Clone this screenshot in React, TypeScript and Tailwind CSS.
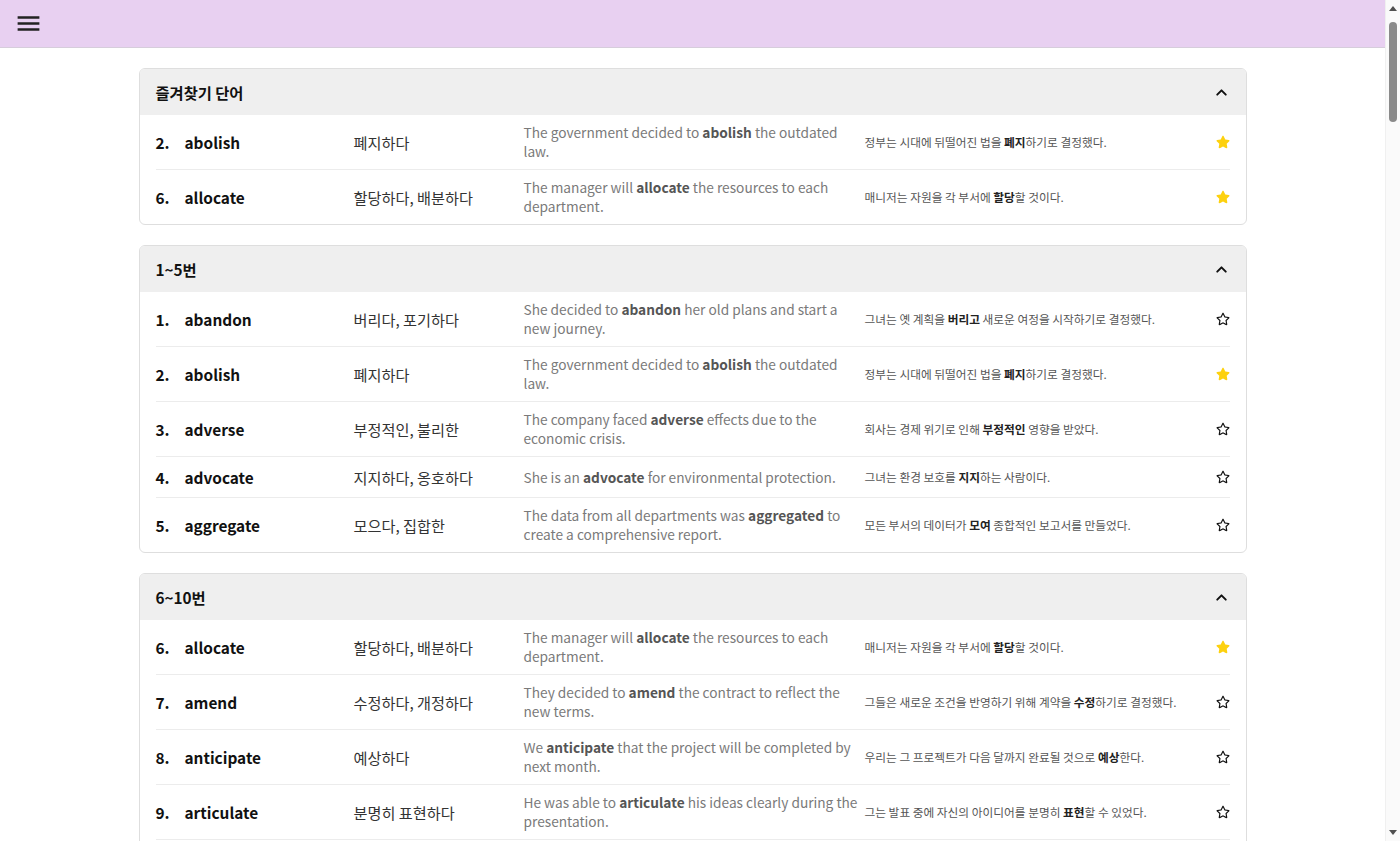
import React from "react";
import { FaStar, FaRegStar } from "react-icons/fa";
import { MdMenu } from "react-icons/md";
import { ChevronUp } from "lucide-react";

type Word = {
  n: number;
  word: string;
  meaning: string;
  en: [string, string, string];
  ko: [string, string, string];
  fav?: boolean;
};

const base: Omit<Word, "n">[] = [
  { word: "abandon", meaning: "버리다, 포기하다", en: ["She decided to ", "abandon", " her old plans and start a new journey."], ko: ["그녀는 옛 계획을 ", "버리고", " 새로운 여정을 시작하기로 결정했다."] },
  { word: "abolish", meaning: "폐지하다", en: ["The government decided to ", "abolish", " the outdated law."], ko: ["정부는 시대에 뒤떨어진 법을 ", "폐지", "하기로 결정했다."], fav: true },
  { word: "adverse", meaning: "부정적인, 불리한", en: ["The company faced ", "adverse", " effects due to the economic crisis."], ko: ["회사는 경제 위기로 인해 ", "부정적인", " 영향을 받았다."] },
  { word: "advocate", meaning: "지지하다, 옹호하다", en: ["She is an ", "advocate", " for environmental protection."], ko: ["그녀는 환경 보호를 ", "지지", "하는 사람이다."] },
  { word: "aggregate", meaning: "모으다, 집합한", en: ["The data from all departments was ", "aggregated", " to create a comprehensive report."], ko: ["모든 부서의 데이터가 ", "모여", " 종합적인 보고서를 만들었다."] },
  { word: "allocate", meaning: "할당하다, 배분하다", en: ["The manager will ", "allocate", " the resources to each department."], ko: ["매니저는 자원을 각 부서에 ", "할당", "할 것이다."], fav: true },
  { word: "amend", meaning: "수정하다, 개정하다", en: ["They decided to ", "amend", " the contract to reflect the new terms."], ko: ["그들은 새로운 조건을 반영하기 위해 계약을 ", "수정", "하기로 결정했다."] },
  { word: "anticipate", meaning: "예상하다", en: ["We ", "anticipate", " that the project will be completed by next month."], ko: ["우리는 그 프로젝트가 다음 달까지 완료될 것으로 ", "예상", "한다."] },
  { word: "articulate", meaning: "분명히 표현하다", en: ["He was able to ", "articulate", " his ideas clearly during the presentation."], ko: ["그는 발표 중에 자신의 아이디어를 분명히 ", "표현", "할 수 있었다."] },
  { word: "assess", meaning: "평가하다", en: ["The teacher will ", "assess", " the students' progress at the end of the term."], ko: ["선생님은 학기 말에 학생들의 진도를 ", "평가", "할 것이다."] },
  { word: "assume", meaning: "가정하다, 떠맡다", en: ["We cannot ", "assume", " that everyone agrees with the plan."], ko: ["우리는 모두가 그 계획에 동의한다고 ", "가정", "할 수 없다."] },
  { word: "attain", meaning: "달성하다, 이루다", en: ["She worked hard to ", "attain", " her goals."], ko: ["그녀는 목표를 ", "달성", "하기 위해 열심히 노력했다."] },
  { word: "attribute", meaning: "~의 탓으로 돌리다", en: ["He ", "attributes", " his success to hard work."], ko: ["그는 자신의 성공을 노력의 ", "덕분", "으로 돌린다."] },
  { word: "augment", meaning: "증가시키다", en: ["The company plans to ", "augment", " its workforce next year."], ko: ["회사는 내년에 인력을 ", "증가", "시킬 계획이다."] },
  { word: "authentic", meaning: "진짜의, 진정한", en: ["The museum displayed ", "authentic", " artifacts from ancient Egypt."], ko: ["박물관은 고대 이집트의 ", "진짜", " 유물을 전시했다."] },
];

const all: Word[] = Array.from({ length: 30 }, (_, i) => ({
  ...base[i % base.length],
  n: i + 1,
  fav: i < base.length ? base[i].fav : false,
}));

function Row({ w, last }: { w: Word; last: boolean }) {
  return (
    <div
      className={`grid grid-cols-[29px_169px_170px_341px_1fr_30px] items-center py-2 ${
        last ? "" : "border-b border-[#ececec]"
      }`}
    >
      <div className="text-[15.4px] font-bold text-[#111] leading-6">{w.n}.</div>
      <div className="text-[15.4px] font-bold text-[#111] leading-6">{w.word}</div>
      <div className="text-[15.2px] text-[#333] leading-6">{w.meaning}</div>
      <div className="text-[13.7px] leading-[19px] text-[#7a7a7a]">
        {w.en[0]}
        <b className="font-bold text-[#555]">{w.en[1]}</b>
        {w.en[2]}
      </div>
      <div className="text-[11.7px] text-[#555] whitespace-nowrap">
        {w.ko[0]}
        <b className="font-bold text-[#222]">{w.ko[1]}</b>
        {w.ko[2]}
      </div>
      <div className="flex justify-end">
        {w.fav ? (
          <FaStar className="text-[#fdd10f]" size={14} />
        ) : (
          <FaRegStar className="text-[#111]" size={14} />
        )}
      </div>
    </div>
  );
}

function Section({ title, words }: { title: string; words: Word[] }) {
  return (
    <div className="rounded-[6px] border border-[#dedede] bg-white overflow-hidden">
      <div className="h-[46px] bg-[#efefef] flex items-center justify-between px-4">
        <span className="text-[15.3px] font-bold text-[#111]">{title}</span>
        <ChevronUp size={17} strokeWidth={2.8} className="text-[#111]" />
      </div>
      <div className="px-4">
        {words.map((w, i) => (
          <Row key={i} w={w} last={i === words.length - 1} />
        ))}
      </div>
    </div>
  );
}

function FakeScrollbar() {
  return (
    <div className="w-[15px] h-full bg-[#fafafa] border-l border-[#f0f0f0] flex flex-col items-center">
      <div className="h-[17px] w-full flex items-center justify-center">
        <div className="w-0 h-0 border-l-[4px] border-r-[4px] border-b-[5px] border-l-transparent border-r-transparent border-b-[#505050]" />
      </div>
      <div className="flex-1 w-full px-[3px] pt-[5px]">
        <div className="h-[100px] w-full rounded-full bg-[#8a8a8a]" />
      </div>
      <div className="h-[17px] w-full flex items-center justify-center">
        <div className="w-0 h-0 border-l-[4px] border-r-[4px] border-t-[5px] border-l-transparent border-r-transparent border-t-[#505050]" />
      </div>
    </div>
  );
}

export default function App() {
  const favs = all.filter((w) => w.fav).slice(0, 2);
  const sections: { title: string; words: Word[] }[] = [];
  for (let i = 0; i < all.length; i += 5) {
    sections.push({ title: `${i + 1}~${i + 5}번`, words: all.slice(i, i + 5) });
  }
  return (
    <div
      className="h-screen flex bg-white overflow-hidden"
      style={{ fontFamily: '"Noto Sans CJK KR", "Noto Sans", sans-serif' }}
    >
      <div className="flex-1 min-w-0 overflow-hidden">
        <header className="h-[48px] bg-[#e8d0f1] border-b border-[#d6cddb] flex items-center px-[14px]">
          <MdMenu size={29} className="text-[#222]" />
        </header>
        <main className="w-[1108px] mx-auto pt-5 pb-10 flex flex-col gap-5">
          <Section title="즐겨찾기 단어" words={favs} />
          {sections.map((s, i) => (
            <Section key={i} title={s.title} words={s.words} />
          ))}
        </main>
      </div>
      <FakeScrollbar />
    </div>
  );
}
